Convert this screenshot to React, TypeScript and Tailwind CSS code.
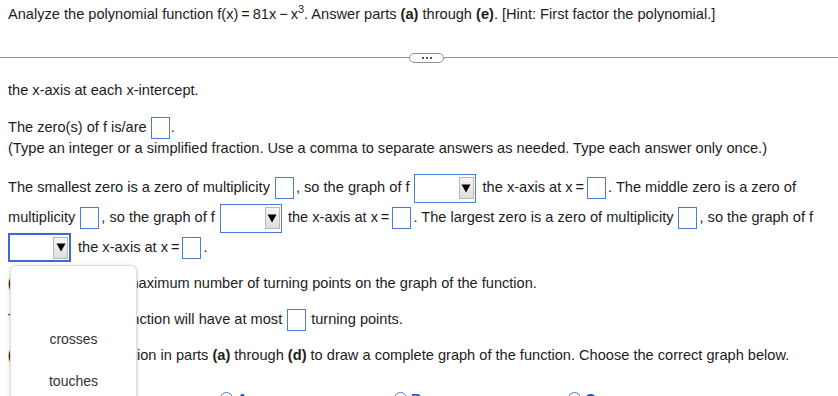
import React from 'react';

// Blank answer box
const Box: React.FC<{ className?: string }> = ({ className = '' }) => (
  <span className={`inline-block w-[19px] h-[22px] border border-[#4a7bd6] bg-white ${className}`} />
);

// Closed dropdown (select look)
const Select: React.FC<{ focused?: boolean; className?: string; children?: React.ReactNode }> = ({
  focused = false,
  className = '',
  children,
}) => (
  <span
    className={`relative inline-flex items-center justify-end w-[62px] h-[29px] bg-white ${
      focused ? 'border-2 border-[#3a6ad2]' : 'border border-[#4a7bd6]'
    } ${className}`}
  >
    <span className="flex items-center justify-center w-[15px] h-[22px] mr-[1px] border border-[#b8b8b8] bg-gradient-to-b from-[#f6f6f6] to-[#dedede]">
      <svg width="10" height="9" viewBox="0 0 10 9">
        <polygon points="0.5,0.5 9.5,0.5 5,8.5" fill="#000" />
      </svg>
    </span>
    {children}
  </span>
);

const Radio: React.FC<{ letter: string }> = ({ letter }) => (
  <div className="flex items-start w-[174px]">
    <span className="w-[13px] h-[13px] rounded-full border border-[#4f79d8] bg-white" />
    <span className="ml-[4px] text-[#2c4fc2] font-bold leading-[14px]">{letter}.</span>
  </div>
);

export default function App() {
  return (
    <div
      className="w-[838px] h-[396px] overflow-hidden bg-white text-[14.6px] text-[#1c1c1c]"
      style={{ fontFamily: '"Liberation Sans", Arial, sans-serif' }}
    >
      {/* Question header */}
      <div className="flex items-center h-[30px] px-2 whitespace-nowrap">
        <span>
          Analyze the polynomial function f(x)&#8201;=&#8201;81x&#8201;&minus;&#8201;x
          <sup className="text-[11px] top-[-6px]">3</sup>. Answer parts <b>(a)</b> through <b>(e)</b>. [Hint: First
          factor the polynomial.]
        </span>
      </div>

      {/* Divider with expand pill */}
      <div className="flex items-center h-[11px] mt-[22px]">
        <div className="w-[409px] h-px bg-[#8a929c]" />
        <div className="flex items-center justify-center gap-[2px] w-[35px] h-[10px] rounded-full border border-[#8a929c] bg-white">
          <span className="w-[2px] h-[2px] bg-[#555]" />
          <span className="w-[2px] h-[2px] bg-[#555]" />
          <span className="w-[2px] h-[2px] bg-[#555]" />
        </div>
        <div className="flex-1 h-px bg-[#8a929c]" />
      </div>

      <div className="px-2 whitespace-nowrap">
        <div className="flex items-center h-[20px] mt-[18px]">the x-axis at each x-intercept.</div>

        <div className="flex items-center h-[24px] mt-[15px]">
          <span>The zero(s) of f is/are</span>
          <Box className="ml-[4px] w-[18px] h-[21px]" />
          <span className="ml-[1px]">.</span>
        </div>
        <div className="flex items-center h-[18px]">
          (Type an integer or a simplified fraction. Use a comma to separate answers as needed. Type each answer only
          once.)
        </div>

        {/* Multiplicity rows */}
        <div className="flex items-center h-[30px] mt-[15px]">
          <span>The smallest zero is a zero of multiplicity</span>
          <Box className="ml-[5px]" />
          <span className="ml-[2px]">, so the graph of f</span>
          <Select className="ml-[4px]" />
          <span className="ml-[7px]">the x-axis at x&#8201;=</span>
          <Box className="ml-[3px]" />
          <span className="ml-[2px]">. The middle zero is a zero of</span>
        </div>
        <div className="flex items-center h-[30px]">
          <span>multiplicity</span>
          <Box className="ml-[5px]" />
          <span className="ml-[2px]">, so the graph of f</span>
          <Select className="ml-[5px]" />
          <span className="ml-[6px]">the x-axis at x&#8201;=</span>
          <Box className="ml-[3px]" />
          <span className="ml-[2px]">. The largest zero is a zero of multiplicity</span>
          <Box className="ml-[5px]" />
          <span className="ml-[2px]">, so the graph of f</span>
        </div>
        <div className="flex items-center h-[29px]">
          <Select focused className="w-[63px]">
            {/* Open option list */}
            <div className="absolute left-[0px] top-[30px] z-10 w-[127px] h-[150px] pt-[10px] rounded-[6px] border border-[#dcdcdc] bg-white shadow-[0_1px_4px_rgba(0,0,0,0.18)] text-[#333] text-[14px]">
              <div className="h-[42px]" />
              <div className="flex items-center justify-center h-[42px]">crosses</div>
              <div className="flex items-center justify-center h-[42px]">touches</div>
            </div>
          </Select>
          <span className="ml-[7px]">the x-axis at x&#8201;=</span>
          <Box className="ml-[3px]" />
          <span className="ml-[2px]">.</span>
        </div>

        {/* Parts (d) and (e) */}
        <div className="flex items-center h-[20px] mt-[12px]">
          <span>
            <b>(d)</b> Determine the maximum number of turning points on the graph of the function.
          </span>
        </div>
        <div className="flex items-center h-[24px] mt-[14px]">
          <span>The graph of the function will have at most</span>
          <Box className="ml-[5px]" />
          <span className="ml-[5px]">turning points.</span>
        </div>
        <div className="flex items-center h-[20px] mt-[14px]">
          <span>
            <b>(e)</b> Use the information in parts <b>(a)</b> through <b>(d)</b> to draw a complete graph of the
            function. Choose the correct graph below.
          </span>
        </div>

        <div className="flex mt-[26px] ml-[212px]">
          <Radio letter="A" />
          <Radio letter="B" />
          <Radio letter="C" />
        </div>
      </div>
    </div>
  );
}
